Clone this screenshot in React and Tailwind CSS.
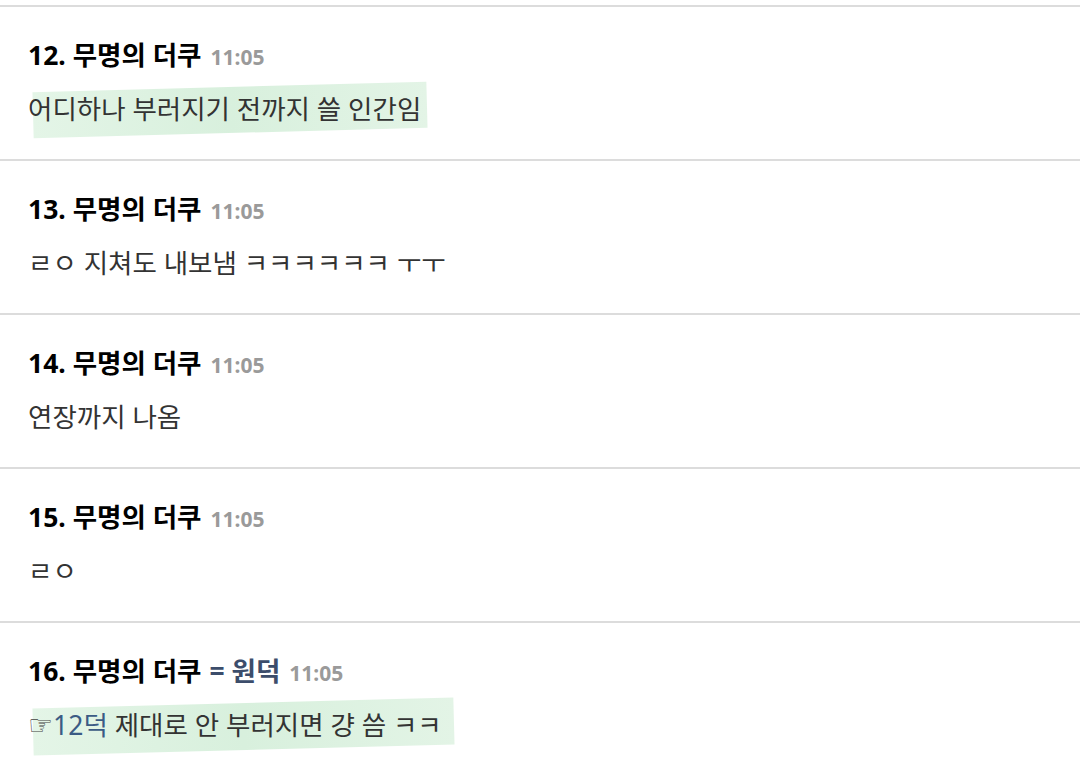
const items = [
  { no: 12, body: '어디하나 부러지기 전까지 쓸 인간임', mark: true },
  { no: 13, body: 'ㄹㅇ 지쳐도 내보냄 ㅋㅋㅋㅋㅋㅋ ㅜㅜ' },
  { no: 14, body: '연장까지 나옴' },
  { no: 15, body: 'ㄹㅇ' },
  { no: 16, op: true, mark: true, reply: true, body: ' 제대로 안 부러지면 걍 씀 ㅋㅋ' },
];

function Marker({ children, wide }) {
  return (
    <span className="relative inline-block">
      <span
        className={`absolute left-[5px] -top-[4px] -bottom-[6px] -rotate-[1.5deg] bg-gradient-to-r from-[#e4f5e7] via-[#d8f0dd] to-[#e3f4e6] ${
          wide ? '-right-[12px]' : '-right-[6px]'
        }`}
      />
      <span className="relative">{children}</span>
    </span>
  );
}

function Comment({ no, body, op, mark, reply }) {
  const content = reply ? (
    <>
      <span className="font-['DejaVu_Sans'] text-[28px] leading-[36px] text-[#444]">☞</span>
      <span className="text-[#3b5b84]">12덕</span>
      {body}
    </>
  ) : (
    body
  );
  return (
    <div className="h-[154px] border-t-2 border-[#dcdcdc] pt-[30px] px-[28px]">
      <div className="flex h-[36px] items-baseline gap-[9px] leading-[36px]">
        <span className="text-[26.5px] font-bold text-black">{no}. 무명의 더쿠</span>
        {op && <span className="text-[26.5px] font-bold text-[#3c4d6b] -ml-[1px]">= 원덕</span>}
        <span className="text-[21px] font-bold text-[#9a9a9a]">11:05</span>
      </div>
      <div className="mt-[18px] h-[36px] text-[26.5px] leading-[36px] text-[#333]">
        {mark ? <Marker wide={reply}>{content}</Marker> : content}
      </div>
    </div>
  );
}

export default function App() {
  return (
    <div className="w-[1080px] h-[772px] overflow-hidden bg-white pt-[5px] font-['Noto_Sans','Noto_Sans_CJK_KR',sans-serif]">
      {items.map((it) => (
        <Comment key={it.no} {...it} />
      ))}
    </div>
  );
}
